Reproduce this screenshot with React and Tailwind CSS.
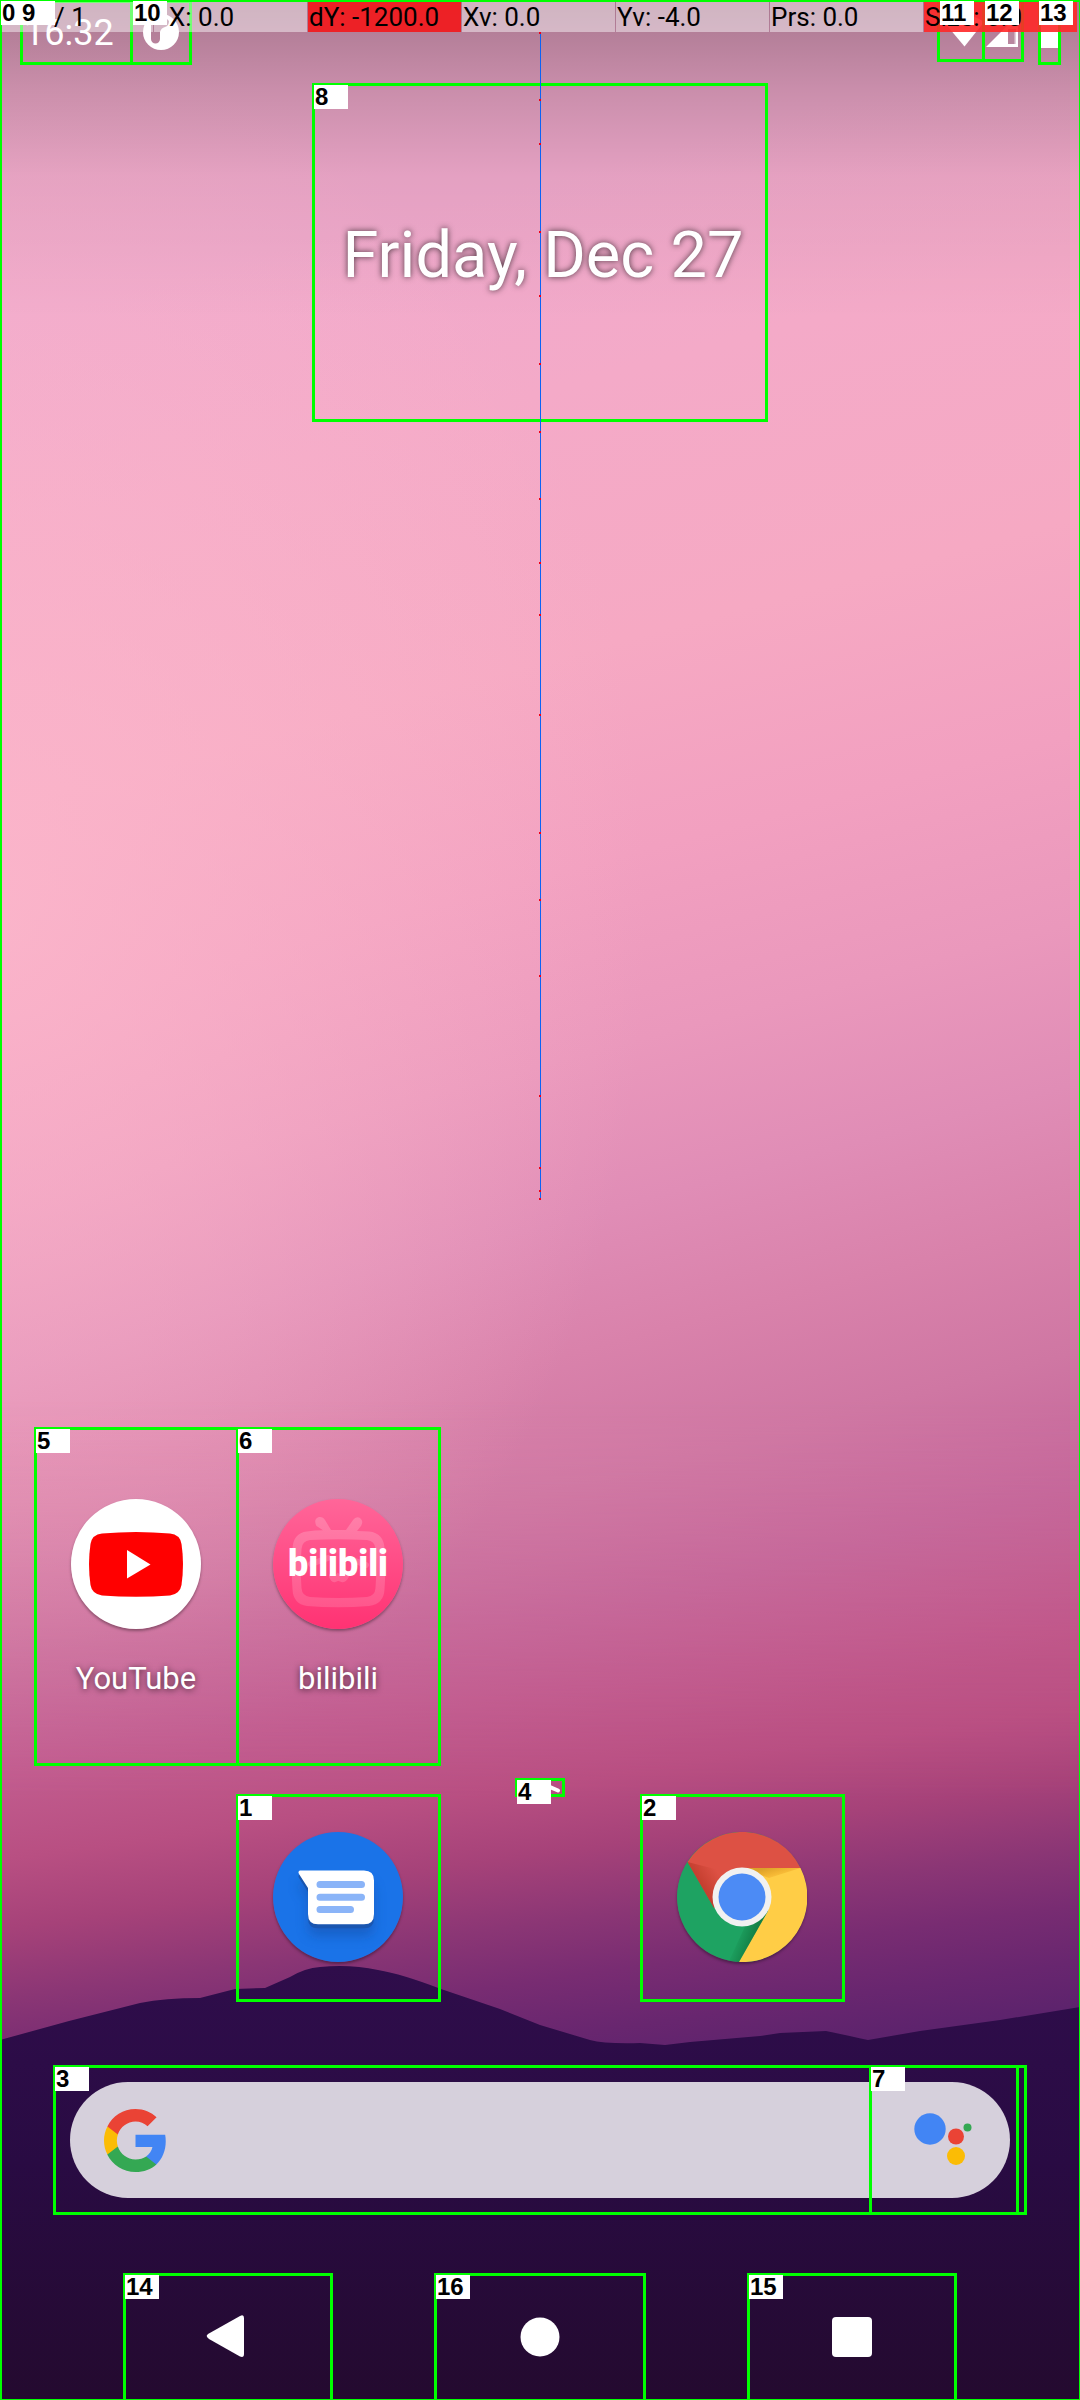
const TRAIL = [33, 100, 144, 232, 296, 364, 432, 499, 563, 615, 715, 833, 900, 976, 1096, 1168, 1191, 1199];

function Tag({ children }) {
  return (
    <span className="absolute -left-px -top-px z-20 h-6 w-[34px] bg-white pl-px text-left font-['Liberation_Sans',sans-serif] text-2xl/6 font-bold text-black">
      {children}
    </span>
  );
}

function Wallpaper() {
  return (
    <div className="absolute inset-0 bg-[linear-gradient(165deg,#f0a9cb_0%,#f0a9cc_12%,#f4aac8_20%,#f6a9c3_30%,#f2a0c0_38%,#ea98bc_45%,#e08db6_51%,#d982ab_56%,#cf77a3_61%,#c4659a_66%,#bf5184_72%)]">
      <div className="absolute inset-0 bg-[radial-gradient(ellipse_60%_38%_at_0%_38%,#fcb8cccc_0%,#fcb8cc00_100%)]" />
      <div className="absolute inset-x-0 bottom-0 h-[1000px] bg-[linear-gradient(172deg,#e28cae_0%,#db88ab_10%,#c96d9a_24%,#c25d8f_32%,#b84f82_40%,#a64279_46%,#8b3675_52%,#782c72_57%,#68266f_62%,#5a226c_67%)] mask-[linear-gradient(to_bottom,transparent,black_40%)]" />
      <div className="absolute inset-x-0 top-0 h-80 bg-[linear-gradient(to_bottom,rgba(0,0,0,0.3),rgba(0,0,0,0.16)_28%,rgba(0,0,0,0.05)_55%,transparent)]" />
      <svg className="absolute inset-x-0 bottom-0 h-[440px] w-full" viewBox="0 0 1080 440" preserveAspectRatio="none" aria-hidden="true">
        <defs>
          <linearGradient id="hill" x1="0" y1="0" x2="0" y2="1">
            <stop offset="0" stopColor="#2f0d4b" />
            <stop offset="0.45" stopColor="#290b43" />
            <stop offset="1" stopColor="#240a2f" />
          </linearGradient>
        </defs>
        <path
          fill="url(#hill)"
          d="M0 80L69 61L140 43Q165 38 200 38L235 29L265 28L290 17Q305 8 320 7Q350 4 378 10Q402 14 441 29L500 49L540 65L590 80Q605 84 640 83L665 85L690 82L760 76L780 73L826 71Q850 76 868 80L920 71L1000 60L1080 47V440H0Z"
        />
      </svg>
    </div>
  );
}

function PointerStrip() {
  const cell = "overflow-hidden whitespace-nowrap pl-px";
  return (
    <div className="absolute inset-x-0 top-0.5 z-10 grid h-[30px] grid-cols-7 gap-px pr-[3px] font-[Roboto,sans-serif] text-[26px]/[30px] text-black">
      <span className="bg-white/45 pl-[54px]">/ 1</span>
      <span className="bg-white/45 pl-[15px]">X: 0.0</span>
      <span className={cell + " bg-[#f01c20]/95"}>dY: -1200.0</span>
      <span className={cell + " bg-white/45"}>Xv: 0.0</span>
      <span className={cell + " bg-white/45"}>Yv: -4.0</span>
      <span className={cell + " bg-white/45"}>Prs: 0.0</span>
      <span className={cell + " bg-[#ff2828]/90"}>Size: 0.0</span>
    </div>
  );
}

function PointerTrail() {
  return (
    <svg className="pointer-events-none absolute left-1/2 top-0 z-10 h-[1200px] w-1 -translate-x-0.5" viewBox="0 0 4 1200" aria-hidden="true">
      <rect x="2" y="32" width="1" height="1168" fill="#0a62f5" />
      {TRAIL.map((y) => (
        <rect key={y} x="1" y={y - 1} width="2" height="2" fill="#f00018" />
      ))}
    </svg>
  );
}

function StatusBar() {
  return (
    <header className="relative flex h-[65px] items-start pl-5 pr-[19px]">
      <div className="relative h-[65px] w-[113px] border-[3px] border-[#00ff00]">
        <time className="block pl-px pt-3 font-[Roboto,sans-serif] text-4xl/[36px] text-white">16:32</time>
      </div>
      <div className="relative -ml-[3px] h-[65px] w-[62px] border-[3px] border-[#00ff00]">
        <svg className="ml-[10px] mt-[11px] size-9" viewBox="0 0 36 36" aria-hidden="true">
          <path
            fill="#fff"
            fillRule="evenodd"
            d="M18 0a18 18 0 1 1 0 36a18 18 0 1 1 0-36ZM8 6V25a4.500 4.500 0 0 0 9 0V18Q18 14 22 13Q26 12 26 7L24 5Z"
          />
        </svg>
      </div>
      <div className="relative ml-auto h-[62px] w-12 border-[3px] border-[#00ff00]">
        <svg className="ml-1 mt-3 h-8 w-[42px]" viewBox="0 0 42 32" aria-hidden="true">
          <path fill="#fff" d="M0 7Q20 -7 40 7L20.500 31.500Z" />
        </svg>
      </div>
      <div className="relative -ml-[3px] h-[62px] w-[42px] border-[3px] border-[#00ff00]">
        <svg className="ml-px mt-3 h-8 w-[34px]" viewBox="0 0 34 32" aria-hidden="true">
          <path fill="#fff" d="M0 32L32 0V32Z" />
          <path fill="#b9879f" d="M22 14H30V17H28.500V29H22Z" />
          <path fill="#b9879f" d="M28 14H30V29H28Z" opacity="0.4" />
        </svg>
      </div>
      <div className="relative ml-[14px] h-[65px] w-[23px] border-[3px] border-[#00ff00]">
        <div className="mt-[10px] h-[35px] bg-white" />
      </div>
    </header>
  );
}

function StatusTags() {
  return (
    <div className="pointer-events-none absolute inset-x-0 top-0 z-20 flex pl-5 pr-[18px]">
      <span className="absolute left-px top-px h-6 w-5 bg-white pl-px font-['Liberation_Sans',sans-serif] text-2xl/6 font-bold">0</span>
      <span className="relative ml-0.5 mt-0.5 w-[112px]"><Tag>9</Tag></span>
      <span className="relative mt-0.5"><Tag>10</Tag></span>
      <span className="relative ml-auto mt-0.5 w-[45px]"><Tag>11</Tag></span>
      <span className="relative mt-0.5 w-[54px]"><Tag>12</Tag></span>
      <span className="relative mt-0.5 w-[22px]"><Tag>13</Tag></span>
    </div>
  );
}

function YouTubeIcon() {
  return (
    <svg className="size-[130px]" viewBox="0 0 130 130" aria-hidden="true">
      <circle cx="65" cy="65" r="65" fill="#fff" />
      <path
        fill="#f00"
        d="M31 34.500Q65 31.500 99 34.500Q109 35.500 110.500 45Q113.500 65 110.500 86Q109 95 99 96.500Q65 99 31 96.500Q21 95 19.500 86Q16.500 65 19.500 45Q21 35.500 31 34.500Z"
      />
      <path fill="#fff" d="M56 51L79.500 65.500L56 79.500Z" />
    </svg>
  );
}

function BilibiliIcon() {
  return (
    <span className="relative flex size-[130px] items-center justify-center">
      <svg className="absolute inset-0 size-[130px]" viewBox="0 0 130 130" aria-hidden="true">
        <defs>
          <linearGradient id="bili" x1="0" y1="0" x2="0" y2="1">
            <stop offset="0" stopColor="#ff6699" />
            <stop offset="1" stopColor="#ff3273" />
          </linearGradient>
          <linearGradient id="tv" x1="0" y1="0" x2="0" y2="1">
            <stop offset="0" stopColor="#fff" stopOpacity="0.2" />
            <stop offset="1" stopColor="#fff" stopOpacity="0.14" />
          </linearGradient>
        </defs>
        <circle cx="65" cy="65" r="65" fill="url(#bili)" />
        <path
          fill="url(#tv)"
          fillRule="evenodd"
          d="M34 32.500Q42 31.300 50 31.300L43.500 27Q40 20 46 18Q50 17.500 52 21L58 31H73L80 21Q83 17 87 19Q91 22 88 27L84 32L96 32.500Q111 34 111.500 50Q113 70 111.500 90Q111 105 96 107Q65 109.500 34 107Q20 105 19.500 90Q18 70 19.500 50Q20 34 34 32.500ZM37 41Q29 42 28.500 50Q27 70 28.500 89Q29 97 37 98Q65 100 94 98Q102 97 102.500 89Q104 70 102.500 50Q102 42 94 41Q65 39.500 37 41Z"
        />
        <path d="M38 65L55 59M77 60L93 66M59 77Q61 83 65 78Q70 83 73 77" fill="none" stroke="#fff" strokeOpacity="0.16" strokeWidth="6" strokeLinecap="round" />
      </svg>
      <span className="relative font-[Roboto,sans-serif] text-4xl font-black text-white">bilibili</span>
    </span>
  );
}

function MessagesIcon() {
  const bubble = "M27 38.500H91Q101 38.500 101 48.500V82Q101 92.300 91 92.300H45Q35 92.300 35 82V56L26 42Q24.500 39.500 27 38.500Z";
  return (
    <svg className="size-[130px]" viewBox="0 0 130 130" aria-hidden="true">
      <defs>
        <filter id="soft" x="-30%" y="-30%" width="160%" height="170%">
          <feGaussianBlur stdDeviation="6" />
        </filter>
      </defs>
      <circle cx="65" cy="65" r="65" fill="#1a73e8" />
      <path d={bubble} transform="translate(0 12)" fill="#174ea6" opacity="0.5" filter="url(#soft)" />
      <path d={bubble} transform="translate(0 4)" fill="#1a56b0" />
      <path d={bubble} fill="#fff" />
      <path d="M47 52.500H88.500M47 65.300H88.500M47 77.500H77.500" stroke="#8ab4f8" strokeWidth="7" strokeLinecap="round" />
    </svg>
  );
}

function ChromeIcon() {
  return (
    <svg className="size-[130px]" viewBox="0 0 130 130" aria-hidden="true">
      <defs>
        <linearGradient id="redShade" gradientUnits="userSpaceOnUse" x1="22" y1="55" x2="42" y2="42">
          <stop offset="0" stopColor="#a52714" stopOpacity="0.5" />
          <stop offset="1" stopColor="#a52714" stopOpacity="0" />
        </linearGradient>
        <linearGradient id="yellowShade" gradientUnits="userSpaceOnUse" x1="90" y1="36" x2="94" y2="50">
          <stop offset="0" stopColor="#c98a1c" stopOpacity="0.65" />
          <stop offset="1" stopColor="#ea8100" stopOpacity="0" />
        </linearGradient>
        <linearGradient id="greenShade" gradientUnits="userSpaceOnUse" x1="76" y1="108" x2="60" y2="102">
          <stop offset="0" stopColor="#055524" stopOpacity="0.45" />
          <stop offset="1" stopColor="#055524" stopOpacity="0" />
        </linearGradient>
      </defs>
      <circle cx="65" cy="65" r="65" fill="#1ea362" />
      <path d="M10.500 30A65 65 0 0 1 123.500 36H65L37 76Z" fill="#dd5144" />
      <path d="M123.500 36A65 65 0 0 1 62 130L91 79L65 36Z" fill="#ffcd46" />
      <path d="M10.500 30L37 76L50 40Z" fill="url(#redShade)" />
      <path d="M65 36H123.500L92 46Z" fill="url(#yellowShade)" />
      <path d="M62 130L91 79L70 90L52 129Z" fill="url(#greenShade)" />
      <circle cx="65" cy="65" r="29.500" fill="#f1f1f1" />
      <circle cx="65" cy="65" r="23.500" fill="#4c8bf5" />
    </svg>
  );
}

function AppTile({ tag, label, icon }) {
  return (
    <button type="button" aria-label={label} className="relative -mr-[3px] flex h-[339px] flex-col items-center border-[3px] border-[#00ff00] pr-px pt-[69px]">
      <Tag>{tag}</Tag>
      <span className="rounded-full shadow-[0_2px_3px_rgba(0,0,0,0.35)]">{icon}</span>
      <span className="mt-8 font-[Roboto,sans-serif] text-[31px]/[36px] text-white [text-shadow:0_1px_6px_rgba(0,0,0,0.65)]">{label}</span>
    </button>
  );
}

function DockTile({ tag, label, icon, className }) {
  return (
    <button type="button" aria-label={label} className={"relative -mr-[3px] flex h-52 flex-col items-center border-[3px] border-[#00ff00] pr-px pt-[35px] " + className}>
      <Tag>{tag}</Tag>
      <span className="rounded-full shadow-[0_2px_3px_rgba(0,0,0,0.35)]">{icon}</span>
    </button>
  );
}

function GoogleLogo() {
  return (
    <svg className="size-[63px]" viewBox="1 1 22 22" aria-hidden="true">
      <path fill="#4285f4" d="M22.560 12.250c0-.78-.07-1.530-.2-2.250H12v4.260h5.920c-.26 1.370-1.040 2.530-2.210 3.310v2.770h3.570c2.080-1.920 3.280-4.740 3.280-8.090z" />
      <path fill="#34a853" d="M12 23c2.970 0 5.460-.98 7.280-2.660l-3.570-2.770c-.98.66-2.230 1.060-3.710 1.060-2.860 0-5.290-1.930-6.160-4.530H2.180v2.840C3.990 20.530 7.700 23 12 23z" />
      <path fill="#fbbc05" d="M5.840 14.090c-.22-.66-.35-1.360-.35-2.090s.13-1.430.35-2.090V7.070H2.180C1.430 8.550 1 10.220 1 12s.43 3.450 1.180 4.930l2.850-2.220.81-.62z" />
      <path fill="#ea4335" d="M12 5.380c1.620 0 3.060.56 4.210 1.640l3.150-3.150C17.450 2.090 14.970 1 12 1 7.700 1 3.990 3.470 2.180 7.070l3.660 2.840c.87-2.600 3.300-4.530 6.160-4.530z" />
    </svg>
  );
}

function SearchBar() {
  return (
    <div className="relative mx-[53px] mt-[63px] border-[3px] border-[#00ff00] p-[14px]">
      <Tag>3</Tag>
      <div className="flex h-[116px] items-center rounded-full bg-[#d6d0dc] pl-[34px] pr-10">
        <GoogleLogo />
        <input type="text" aria-label="Google search" className="h-full min-w-0 flex-1 bg-transparent px-6 font-[Roboto,sans-serif] text-3xl outline-none" />
      </div>
      <button type="button" aria-label="Voice assistant" className="absolute -bottom-[3px] -top-[3px] right-[5px] w-[150px] border-[3px] border-[#00ff00]">
        <Tag>7</Tag>
        <svg className="ml-[42px] h-[54px] w-[60px]" viewBox="0 0 60 54" aria-hidden="true">
          <circle cx="16" cy="16" r="15.700" fill="#4285f4" />
          <circle cx="42" cy="23.500" r="8" fill="#ea4335" />
          <circle cx="53.500" cy="14.500" r="4" fill="#34a853" />
          <circle cx="42" cy="43" r="9" fill="#fbbc05" />
        </svg>
      </button>
    </div>
  );
}

function NavButton({ tag, label, className, children }) {
  return (
    <button type="button" aria-label={label} className={"relative flex h-[127px] items-center justify-center border-[3px] border-b-0 border-[#00ff00] " + className}>
      <Tag>{tag}</Tag>
      <svg className="size-12" viewBox="0 0 48 48" fill="#fff" aria-hidden="true">
        {children}
      </svg>
    </button>
  );
}

export default function App() {
  return (
    <main className="relative flex min-h-screen flex-col overflow-hidden">
      <Wallpaper />
      <div className="pointer-events-none absolute inset-0 z-20 border-2 border-b border-r border-[#00ff00]" />
      <PointerTrail />
      <StatusBar />
      <PointerStrip />
      <StatusTags />

      <section className="relative mx-auto mt-[18px] flex h-[339px] w-[456px] items-center justify-center border-[3px] border-[#00ff00]">
        <Tag>8</Tag>
        <h1 className="whitespace-nowrap pl-1.5 pt-1 font-[Roboto,sans-serif] text-[65px]/[72px] text-white [text-shadow:0_0_6px_rgba(0,0,0,0.7)]">Friday, Dec 27</h1>
      </section>

      <div className="flex-1" />

      <section className="relative grid grid-cols-5 pl-[34px] pr-9">
        <AppTile tag="5" label="YouTube" icon={<YouTubeIcon />} />
        <AppTile tag="6" label="bilibili" icon={<BilibiliIcon />} />
      </section>

      <div className="relative mx-auto mt-3 h-[19px] w-[50px] border-[3px] border-[#00ff00]">
        <Tag>4</Tag>
        <svg className="ml-auto mt-0.5 h-3 w-3" viewBox="0 0 12 12" aria-hidden="true">
          <path d="M0 4L8 7.500" stroke="#fff" strokeWidth="4" strokeLinecap="round" />
        </svg>
      </div>

      <section className="relative -mt-[3px] grid grid-cols-5 pl-[34px] pr-9">
        <DockTile tag="1" label="Messages" icon={<MessagesIcon />} className="col-start-2" />
        <DockTile tag="2" label="Chrome" icon={<ChromeIcon />} className="col-start-4" />
      </section>

      <SearchBar />

      <nav className="relative mt-[58px] flex justify-between px-[123px]">
        <NavButton tag="14" label="Back" className="w-[210px]">
          <path d="M3 23Q2 21.500 4 20L36 2Q40 0 40 4V40Q40 44 36 42.500L5 25Z" />
        </NavButton>
        <NavButton tag="16" label="Home" className="w-[212px]">
          <circle cx="24" cy="23" r="19.500" />
        </NavButton>
        <NavButton tag="15" label="Recent apps" className="w-[210px]">
          <rect x="4" y="3" width="40" height="40" rx="4" />
        </NavButton>
      </nav>
    </main>
  );
}
